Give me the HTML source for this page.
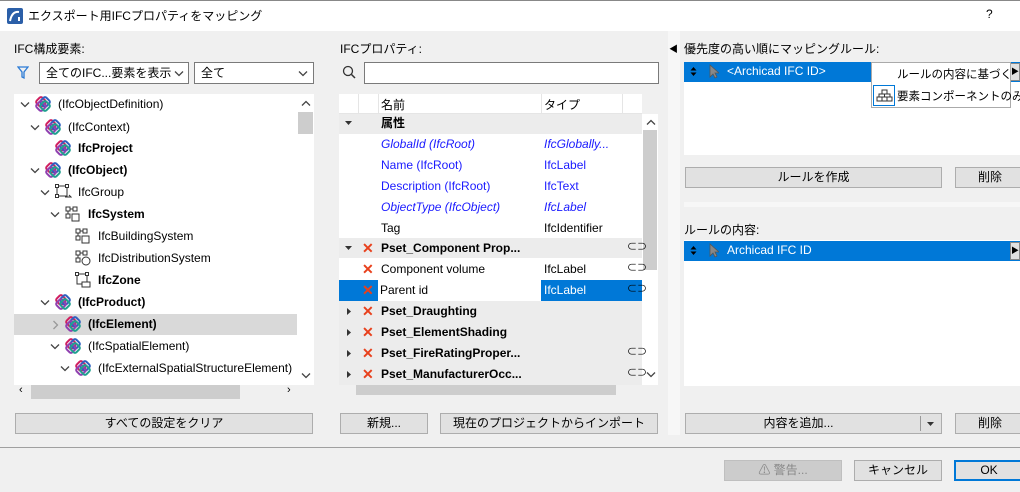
<!DOCTYPE html>
<html><head><meta charset="utf-8"><style>
*{box-sizing:border-box;margin:0;padding:0}
body{width:1020px;height:492px;background:#f0f0f0;font-family:"Liberation Sans","Noto Sans CJK JP",sans-serif;font-size:12px;color:#000;position:relative;overflow:hidden}
.a{position:absolute;white-space:nowrap}
.btn{position:absolute;background:#e1e1e1;border:1px solid #adadad;text-align:center;line-height:18px;height:21px}
.box{position:absolute;background:#fff}
.sel{position:absolute;background:#fff;border:1px solid #7a7a7a;height:22px;line-height:20px;padding-left:6px}
.row{position:absolute;height:22px;line-height:22px;white-space:nowrap}
.b{font-weight:bold}
.blue{color:#1a1aff}
.x{color:#e8401c;font-weight:bold;font-size:14px}
.cv{position:absolute}
</style></head><body>
<svg width="0" height="0" style="position:absolute"><defs>
<path id="dn" d="M1 1.5l4 4 4-4" stroke="#444" fill="none" stroke-width="1.3"/>
<path id="up" d="M1 5.5l4-4 4 4" stroke="#444" fill="none" stroke-width="1.3"/>
<g id="ifc"><rect x="2" y="2" width="8" height="8" rx="2" transform="rotate(45 6 6)" fill="none" stroke="#d02060" stroke-width="2"/><rect x="6" y="2" width="8" height="8" rx="2" transform="rotate(45 10 6)" fill="none" stroke="#3060c0" stroke-width="2"/><rect x="2" y="6" width="8" height="8" rx="2" transform="rotate(45 6 10)" fill="none" stroke="#9040b0" stroke-width="2"/><rect x="6" y="6" width="8" height="8" rx="2" transform="rotate(45 10 10)" fill="none" stroke="#20a090" stroke-width="2"/></g>
</defs></svg>
<div class="a" style="left:0;top:0;width:1020px;height:31px;background:#fff;border-top:1px solid #888"></div>
<svg class="a" style="left:7px;top:8px" width="16" height="16"><rect width="16" height="16" rx="2" fill="#2b5fa8"/><path d="M3 13 Q5 3 12 4" stroke="#fff" stroke-width="2" fill="none"/><rect x="11" y="9" width="2" height="4" fill="#fff"/></svg>
<div class="a" style="left:28px;top:7px">エクスポート用IFCプロパティをマッピング</div>
<div class="a" style="left:986px;top:7px">?</div>

<!-- left -->
<div class="a" style="left:14px;top:40px">IFC構成要素:</div>
<svg class="a" style="left:17px;top:66px" width="12" height="14"><path d="M1 1h10l-4 5v6l-2-1v-5z" fill="none" stroke="#2a7ad5" stroke-width="1.3"/></svg>
<div class="sel" style="left:39px;top:62px;width:150px">全てのIFC...要素を表示</div>
<svg class="cv" style="left:174px;top:70px" width="10" height="7"><use href="#dn"/></svg>
<div class="sel" style="left:194px;top:62px;width:120px">全て</div>
<svg class="cv" style="left:298px;top:70px" width="10" height="7"><use href="#dn"/></svg>
<div class="box" style="left:14px;top:94px;width:284px;height:291px"></div>
<div class="a" style="left:298px;top:94px;width:16px;height:291px;background:#fff"></div>
<div class="a" style="left:298px;top:112px;width:15px;height:22px;background:#cdcdcd"></div>
<svg class="cv" style="left:301px;top:100px" width="10" height="7"><use href="#up"/></svg>
<svg class="cv" style="left:301px;top:372px" width="10" height="7"><use href="#dn"/></svg>
<div class="a" style="left:14px;top:385px;width:300px;height:14px;background:#f0f0f0"></div>
<div class="a" style="left:31px;top:385px;width:209px;height:14px;background:#cdcdcd"></div>
<div class="a" style="left:19px;top:384px;font-size:11px">‹</div>
<div class="a" style="left:287px;top:384px;font-size:11px">›</div>
<div class="a" style="left:14px;top:314px;width:283px;height:21px;background:#d9d9d9"></div>
<svg class="cv" style="left:20px;top:101px" width="10" height="7"><use href="#dn"/></svg><svg class="a" style="left:35px;top:96px" width="16" height="16"><use href="#ifc"/></svg><div class="row" style="left:58px;top:93px">(IfcObjectDefinition)</div>
<svg class="cv" style="left:30px;top:124px" width="10" height="7"><use href="#dn"/></svg><svg class="a" style="left:45px;top:119px" width="16" height="16"><use href="#ifc"/></svg><div class="row" style="left:68px;top:116px">(IfcContext)</div>
<svg class="a" style="left:55px;top:140px" width="16" height="16"><use href="#ifc"/></svg><div class="row b" style="left:78px;top:137px">IfcProject</div>
<svg class="cv" style="left:30px;top:167px" width="10" height="7"><use href="#dn"/></svg><svg class="a" style="left:45px;top:162px" width="16" height="16"><use href="#ifc"/></svg><div class="row b" style="left:68px;top:159px">(IfcObject)</div>
<svg class="cv" style="left:40px;top:189px" width="10" height="7"><use href="#dn"/></svg>
<svg class="a" style="left:55px;top:184px" width="17" height="16"><rect x="2" y="2" width="10" height="10" fill="none" stroke="#333"/><rect x="0.5" y="0.5" width="3" height="3" fill="#fff" stroke="#333"/><rect x="10.5" y="0.5" width="3" height="3" fill="#fff" stroke="#333"/><rect x="0.5" y="10.5" width="3" height="3" fill="#fff" stroke="#333"/><path d="M10 13h6l-2-2" fill="none" stroke="#333"/></svg>
<div class="row" style="left:78px;top:181px">IfcGroup</div>
<svg class="cv" style="left:50px;top:211px" width="10" height="7"><use href="#dn"/></svg>
<svg class="a" style="left:65px;top:206px" width="16" height="16"><rect x="1" y="1" width="4" height="4" fill="none" stroke="#333"/><rect x="8" y="1" width="4" height="4" fill="none" stroke="#333"/><rect x="1" y="8" width="4" height="4" fill="none" stroke="#333"/><rect x="7" y="8" width="7" height="7" fill="none" stroke="#333"/><path d="M3 5v3M5 3h3" stroke="#333"/></svg>
<div class="row b" style="left:88px;top:203px">IfcSystem</div>
<svg class="a" style="left:75px;top:228px" width="16" height="16"><rect x="1" y="1" width="4" height="4" fill="none" stroke="#333"/><rect x="8" y="1" width="4" height="4" fill="none" stroke="#333"/><rect x="1" y="8" width="4" height="4" fill="none" stroke="#333"/><rect x="7" y="8" width="7" height="7" fill="none" stroke="#333"/><path d="M3 5v3M5 3h3" stroke="#333"/></svg>
<div class="row" style="left:98px;top:225px">IfcBuildingSystem</div>
<svg class="a" style="left:75px;top:250px" width="16" height="16"><rect x="1" y="1" width="4" height="4" fill="none" stroke="#333"/><rect x="8" y="1" width="4" height="4" fill="none" stroke="#333"/><rect x="1" y="8" width="4" height="4" fill="none" stroke="#333"/><circle cx="11" cy="11" r="4" fill="none" stroke="#333"/><path d="M3 5v3M5 3h3" stroke="#333"/></svg>
<div class="row" style="left:98px;top:247px">IfcDistributionSystem</div>
<svg class="a" style="left:75px;top:272px" width="16" height="16"><rect x="2" y="2" width="10" height="10" fill="none" stroke="#333"/><rect x="0.5" y="0.5" width="3" height="3" fill="#fff" stroke="#333"/><rect x="10.5" y="0.5" width="3" height="3" fill="#fff" stroke="#333"/><rect x="7" y="10" width="8" height="5" fill="#fff" stroke="#333"/></svg>
<div class="row b" style="left:98px;top:269px">IfcZone</div>
<svg class="cv" style="left:40px;top:299px" width="10" height="7"><use href="#dn"/></svg><svg class="a" style="left:55px;top:294px" width="16" height="16"><use href="#ifc"/></svg><div class="row b" style="left:78px;top:291px">(IfcProduct)</div>
<svg class="cv" style="left:52px;top:320px" width="7" height="10"><path d="M1.5 1l4 4-4 4" stroke="#999" fill="none" stroke-width="1.3"/></svg><svg class="a" style="left:65px;top:316px" width="16" height="16"><use href="#ifc"/></svg><div class="row b" style="left:88px;top:313px">(IfcElement)</div>
<svg class="cv" style="left:50px;top:343px" width="10" height="7"><use href="#dn"/></svg><svg class="a" style="left:65px;top:338px" width="16" height="16"><use href="#ifc"/></svg><div class="row" style="left:88px;top:335px">(IfcSpatialElement)</div>
<svg class="cv" style="left:60px;top:365px" width="10" height="7"><use href="#dn"/></svg><svg class="a" style="left:75px;top:360px" width="16" height="16"><use href="#ifc"/></svg><div class="row" style="left:98px;top:357px;width:199px;overflow:hidden">(IfcExternalSpatialStructureElement)</div>
<div class="btn" style="left:15px;top:413px;width:298px">すべての設定をクリア</div>

<!-- middle -->
<div class="a" style="left:340px;top:40px">IFCプロパティ:</div>
<svg class="a" style="left:342px;top:65px" width="14" height="14"><circle cx="6" cy="6" r="4.5" fill="none" stroke="#333" stroke-width="1.3"/><path d="M9.5 9.5 L13 13" stroke="#333" stroke-width="1.5"/></svg>
<div class="sel" style="left:364px;top:62px;width:295px"></div>
<div class="box" style="left:339px;top:94px;width:303px;height:291px"></div>
<div class="a" style="left:339px;top:94px;width:303px;height:20px;background:#fff;border-bottom:1px solid #e5e5e5"></div>
<div class="a" style="left:358px;top:94px;height:20px;border-left:1px solid #e5e5e5"></div>
<div class="a" style="left:378px;top:94px;height:20px;border-left:1px solid #e5e5e5"></div>
<div class="a" style="left:541px;top:94px;height:20px;border-left:1px solid #e5e5e5"></div>
<div class="a" style="left:622px;top:94px;height:20px;border-left:1px solid #e5e5e5"></div>
<div class="a" style="left:381px;top:96px">名前</div><div class="a" style="left:544px;top:96px">タイプ</div>
<div class="a" style="left:642px;top:114px;width:16px;height:271px;background:#fff"></div>
<div class="a" style="left:643px;top:130px;width:14px;height:140px;background:#cdcdcd"></div>
<svg class="cv" style="left:646px;top:119px" width="10" height="7"><use href="#up"/></svg>
<svg class="cv" style="left:646px;top:371px" width="10" height="7"><use href="#dn"/></svg>
<div class="a" style="left:339px;top:114px;width:303px;height:20px;background:#ececec"></div>
<div class="a" style="left:339px;top:238px;width:303px;height:20px;background:#ececec"></div>
<div class="a" style="left:339px;top:301px;width:303px;height:84px;background:#ececec"></div>
<div class="a" style="left:339px;top:280px;width:303px;height:21px;background:#0078d7"></div>
<div class="a" style="left:378px;top:280px;width:163px;height:21px;background:#fff"></div>
<div class="a" style="left:339px;top:385px;width:319px;height:12px;background:#f0f0f0"></div>
<div class="a" style="left:356px;top:385px;width:260px;height:10px;background:#cdcdcd"></div>
<svg class="cv" style="left:344px;top:120px" width="9" height="6"><path d="M1 1h7l-3.5 4z" fill="#333"/></svg><div class="row b" style="left:381px;top:112px">属性</div>
<div class="row blue" style="left:381px;top:133px;font-style:italic">GlobalId (IfcRoot)</div><div class="row blue" style="left:544px;top:133px;font-style:italic">IfcGlobally...</div>
<div class="row blue" style="left:381px;top:154px">Name (IfcRoot)</div><div class="row blue" style="left:544px;top:154px">IfcLabel</div>
<div class="row blue" style="left:381px;top:175px">Description (IfcRoot)</div><div class="row blue" style="left:544px;top:175px">IfcText</div>
<div class="row blue" style="left:381px;top:196px;font-style:italic">ObjectType (IfcObject)</div><div class="row blue" style="left:544px;top:196px;font-style:italic">IfcLabel</div>
<div class="row" style="left:381px;top:217px">Tag</div><div class="row" style="left:544px;top:217px">IfcIdentifier</div>
<svg class="cv" style="left:344px;top:245px" width="9" height="6"><path d="M1 1h7l-3.5 4z" fill="#333"/></svg><div class="row x" style="left:362px;top:237px">✕</div><div class="row b" style="left:381px;top:237px">Pset_Component Prop...</div><div class="row" style="left:627px;top:237px;font-size:10px">⊂⊃</div>
<div class="row x" style="left:362px;top:258px">✕</div><div class="row" style="left:381px;top:258px">Component volume</div><div class="row" style="left:544px;top:258px">IfcLabel</div><div class="row" style="left:627px;top:258px;font-size:10px">⊂⊃</div>
<div class="row x" style="left:362px;top:279px">✕</div><div class="row" style="left:380px;top:279px">Parent id</div><div class="row" style="left:544px;top:279px;color:#fff">IfcLabel</div><div class="row" style="left:627px;top:279px;font-size:10px">⊂⊃</div>
<svg class="cv" style="left:346px;top:307px" width="6" height="9"><path d="M1 1v7l4-3.5z" fill="#333"/></svg><div class="row x" style="left:362px;top:300px">✕</div><div class="row b" style="left:381px;top:300px">Pset_Draughting</div>
<svg class="cv" style="left:346px;top:328px" width="6" height="9"><path d="M1 1v7l4-3.5z" fill="#333"/></svg><div class="row x" style="left:362px;top:321px">✕</div><div class="row b" style="left:381px;top:321px">Pset_ElementShading</div>
<svg class="cv" style="left:346px;top:349px" width="6" height="9"><path d="M1 1v7l4-3.5z" fill="#333"/></svg><div class="row x" style="left:362px;top:342px">✕</div><div class="row b" style="left:381px;top:342px">Pset_FireRatingProper...</div><div class="row" style="left:627px;top:342px;font-size:10px">⊂⊃</div>
<svg class="cv" style="left:346px;top:370px" width="6" height="9"><path d="M1 1v7l4-3.5z" fill="#333"/></svg><div class="row x" style="left:362px;top:363px">✕</div><div class="row b" style="left:381px;top:363px">Pset_ManufacturerOcc...</div><div class="row" style="left:627px;top:363px;font-size:10px">⊂⊃</div>
<div class="btn" style="left:340px;top:413px;width:88px">新規...</div>
<div class="btn" style="left:440px;top:413px;width:218px">現在のプロジェクトからインポート</div>

<!-- right -->
<div class="a" style="left:668px;top:31px;width:12px;height:404px;background:#f7f7f7"></div>
<div class="a" style="left:669px;top:42px;font-size:9px">◀</div>
<div class="a" style="left:684px;top:40px">優先度の高い順にマッピングルール:</div>
<div class="box" style="left:684px;top:62px;width:336px;height:93px"></div>
<div class="a" style="left:684px;top:62px;width:336px;height:20px;background:#0078d7"></div>
<svg class="cv" style="left:690px;top:66px" width="7" height="11"><path d="M0.5 4.5L3.5 1 6.5 4.5zM0.5 6.5L3.5 10 6.5 6.5z" fill="#000"/></svg>
<svg class="cv" style="left:709px;top:64px" width="10" height="15"><path d="M1 1v12l3-3 2 4 2-1-2-4h4z" fill="#888" stroke="#555" stroke-width="0.8"/></svg>
<div class="a" style="left:727px;top:64px;color:#fff">&lt;Archicad IFC ID&gt;</div>
<div class="a" style="left:1010px;top:63px;width:10px;height:18px;background:#e1e1e1;border:1px solid #888;font-size:8px;line-height:16px">▶</div>
<div class="a" style="left:871px;top:62px;width:140px;height:46px;background:#fff;border:1px solid #aaa"></div>
<div class="a" style="left:897px;top:66px;font-size:11.5px">ルールの内容に基づく</div>
<div class="a" style="left:873px;top:85px;width:22px;height:21px;border:1px solid #0078d7"></div>
<svg class="cv" style="left:876px;top:89px" width="17" height="13"><path d="M6 1h5v4H6zM3 5h11v3H3zM1 8h15v4H1zM8.5 5v3M6 8v4M11 8v4" fill="none" stroke="#333"/></svg>
<div class="a" style="left:897px;top:88px;font-size:11.5px">要素コンポーネントのみ</div>
<div class="btn" style="left:685px;top:167px;width:257px">ルールを作成</div>
<div class="btn" style="left:955px;top:167px;width:70px">削除</div>
<div class="a" style="left:684px;top:202px;width:336px;height:5px;background:#f7f7f7"></div>
<div class="a" style="left:684px;top:221px">ルールの内容:</div>
<div class="box" style="left:684px;top:240px;width:336px;height:146px"></div>
<div class="a" style="left:684px;top:241px;width:336px;height:20px;background:#0078d7"></div>
<svg class="cv" style="left:690px;top:245px" width="7" height="11"><path d="M0.5 4.5L3.5 1 6.5 4.5zM0.5 6.5L3.5 10 6.5 6.5z" fill="#000"/></svg>
<svg class="cv" style="left:709px;top:243px" width="10" height="15"><path d="M1 1v12l3-3 2 4 2-1-2-4h4z" fill="#888" stroke="#555" stroke-width="0.8"/></svg>
<div class="a" style="left:727px;top:243px;color:#fff">Archicad IFC ID</div>
<div class="a" style="left:1010px;top:242px;width:10px;height:18px;background:#e1e1e1;border:1px solid #888;font-size:8px;line-height:16px">▶</div>
<div class="btn" style="left:685px;top:413px;width:257px;padding-right:30px">内容を追加...</div>
<div class="a" style="left:920px;top:416px;height:15px;border-left:1px solid #999"></div>
<svg class="cv" style="left:926px;top:421px" width="9" height="6"><path d="M1 1h7l-3.5 4z" fill="#333"/></svg>
<div class="btn" style="left:955px;top:413px;width:70px">削除</div>

<!-- bottom -->
<div class="a" style="left:0;top:447px;width:1020px;height:1px;background:#a0a0a0"></div>
<div class="btn" style="left:724px;top:460px;width:118px;background:#cccccc;border-color:#bfbfbf;color:#888">⚠ 警告...</div>
<div class="btn" style="left:854px;top:460px;width:88px">キャンセル</div>
<div class="btn" style="left:954px;top:460px;width:70px;border:2px solid #0078d7;line-height:17px">OK</div>
</body></html>
